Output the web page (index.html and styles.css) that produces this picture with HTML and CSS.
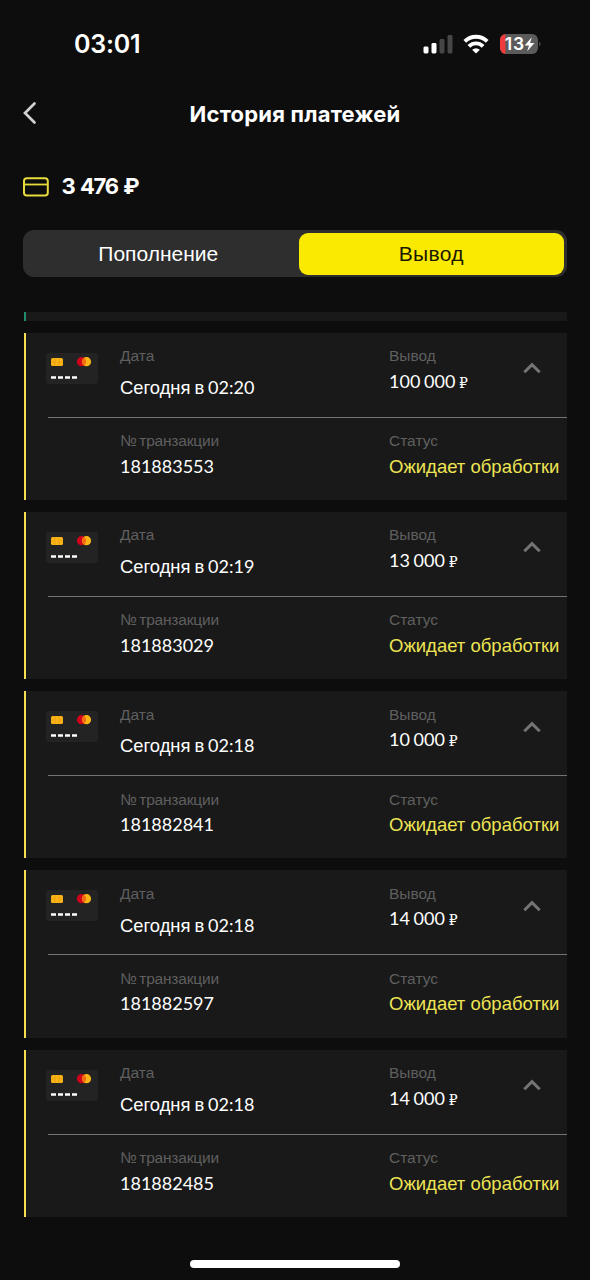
FILE: index.html
```html
<!DOCTYPE html>
<html lang="ru">
<head>
<meta charset="utf-8">
<title>История платежей</title>
<link rel="stylesheet" href="styles.css">
</head>
<body>
<svg class="defs" width="0" height="0">
  <symbol id="bank-card" viewBox="0 0 52 31">
    <rect width="52" height="31" rx="3" fill="#232323"/>
    <rect x="5" y="5" width="12" height="8" rx="1.6" fill="#fbb415"/>
    <path d="M5 9h3.5M13.500 9H17M9 5.200v7.600M13 5.200v7.600" stroke="#e69a10" stroke-width=".7"/>
    <circle cx="35.500" cy="8.700" r="4.600" fill="#d0021b"/>
    <circle cx="40.500" cy="8.700" r="4.600" fill="#fbb415"/>
    <path d="M38 4.800a4.600 4.600 0 0 1 0 7.800a4.600 4.600 0 0 1 0-7.800z" fill="#f36c12"/>
    <path d="M5 24.500h5M12 24.500h5M19 24.500h5M26 24.500h5" stroke="#fff" stroke-width="2.600"/>
  </symbol>
  <symbol id="chevron-up" viewBox="0 0 18 12">
    <path d="M1.300 10.300L9 2.600l7.700 7.700" fill="none" stroke="#747474" stroke-width="3"/>
  </symbol>
</svg>
<div class="screen">
  <div class="status">
    <span class="clock">03:01</span>
    <svg class="signal" width="30" height="20" viewBox="0 0 30 20">
      <rect x="0.500" y="12.500" width="5" height="7" rx="1.400" fill="#fff"/>
      <rect x="8.500" y="9" width="5" height="10.500" rx="1.400" fill="#fff"/>
      <rect x="16.500" y="5" width="5" height="14.500" rx="1.400" fill="#464646"/>
      <rect x="24.500" y="1" width="5" height="18.500" rx="1.400" fill="#464646"/>
    </svg>
    <svg class="wifi" width="26" height="20" viewBox="0 0 26 20">
      <g fill="none" stroke="#fff" stroke-width="3.900">
        <path d="M1.800 7.400C8 1.100 18 1.100 24.200 7.400"/>
        <path d="M5.900 12.300C10 8.400 16 8.400 20.100 12.300"/>
      </g>
      <path d="M9.100 15.700Q13 12.600 16.900 15.700L13 19.600z" fill="#fff"/>
    </svg>
    <svg class="battery" width="42" height="22" viewBox="0 0 42 22">
      <defs><clipPath id="shell"><rect x="0" y="1" width="38" height="20" rx="6"/></clipPath></defs>
      <rect x="0" y="1" width="38" height="20" rx="6" fill="#5b5b5b"/>
      <rect x="0" y="1" width="5.500" height="20" fill="#ee3b3b" clip-path="url(#shell)"/>
      <path d="M39.300 8.500q2.600 2.500 0 5z" fill="#5b5b5b"/>
      <text class="percent" x="4.700" y="17.300" textLength="19.500">13</text>
      <path d="M31.800 4.300L24.700 12.500h4.300L27.200 18.300 34.500 10h-4.400z" fill="#fff"/>
    </svg>
  </div>

  <header class="header">
    <svg class="back" width="14" height="24" viewBox="0 0 14 24">
      <path d="M11.500 2.500L2 12l9.500 9.500" fill="none" stroke="#d2d2d2" stroke-width="2.700" stroke-linecap="round"/>
    </svg>
    <h1 class="title">История платежей</h1>
  </header>

  <div class="balance">
    <svg width="26" height="20" viewBox="0 0 26 20">
      <rect x="1" y="1.200" width="23.800" height="17.400" rx="2.800" fill="none" stroke="#e6dc3c" stroke-width="2"/>
      <path d="M1 7.500h24" stroke="#e6dc3c" stroke-width="1.800"/>
    </svg>
    <span class="sum">3 476 ₽</span>
  </div>

  <div class="tabs">
    <div class="tab">Пополнение</div>
    <div class="tab active"><span>Вывод</span></div>
  </div>

  <main class="list">
    <div class="stub"></div>

    <section class="card">
      <div class="row first">
        <svg class="pic"><use href="#bank-card"/></svg>
        <div class="cell"><span class="label l-date">Дата</span><span class="value low"><span class="w">Сегодня в</span> 02:20</span></div>
        <div class="cell"><span class="label l-out">Вывод</span><span class="value">100 000 <i class="rub">₽</i></span></div>
        <svg class="chev"><use href="#chevron-up"/></svg>
      </div>
      <div class="row second">
        <div class="cell tx"><span class="label l-tx">№ транзакции</span><span class="value">181883553</span></div>
        <div class="cell"><span class="label l-st">Статус</span><span class="value pending">Ожидает обработки</span></div>
      </div>
    </section>

    <section class="card">
      <div class="row first">
        <svg class="pic"><use href="#bank-card"/></svg>
        <div class="cell"><span class="label l-date">Дата</span><span class="value low"><span class="w">Сегодня в</span> 02:19</span></div>
        <div class="cell"><span class="label l-out">Вывод</span><span class="value">13 000 <i class="rub">₽</i></span></div>
        <svg class="chev"><use href="#chevron-up"/></svg>
      </div>
      <div class="row second">
        <div class="cell tx"><span class="label l-tx">№ транзакции</span><span class="value">181883029</span></div>
        <div class="cell"><span class="label l-st">Статус</span><span class="value pending">Ожидает обработки</span></div>
      </div>
    </section>

    <section class="card">
      <div class="row first">
        <svg class="pic"><use href="#bank-card"/></svg>
        <div class="cell"><span class="label l-date">Дата</span><span class="value low"><span class="w">Сегодня в</span> 02:18</span></div>
        <div class="cell"><span class="label l-out">Вывод</span><span class="value">10 000 <i class="rub">₽</i></span></div>
        <svg class="chev"><use href="#chevron-up"/></svg>
      </div>
      <div class="row second">
        <div class="cell tx"><span class="label l-tx">№ транзакции</span><span class="value">181882841</span></div>
        <div class="cell"><span class="label l-st">Статус</span><span class="value pending">Ожидает обработки</span></div>
      </div>
    </section>

    <section class="card">
      <div class="row first">
        <svg class="pic"><use href="#bank-card"/></svg>
        <div class="cell"><span class="label l-date">Дата</span><span class="value low"><span class="w">Сегодня в</span> 02:18</span></div>
        <div class="cell"><span class="label l-out">Вывод</span><span class="value">14 000 <i class="rub">₽</i></span></div>
        <svg class="chev"><use href="#chevron-up"/></svg>
      </div>
      <div class="row second">
        <div class="cell tx"><span class="label l-tx">№ транзакции</span><span class="value">181882597</span></div>
        <div class="cell"><span class="label l-st">Статус</span><span class="value pending">Ожидает обработки</span></div>
      </div>
    </section>

    <section class="card">
      <div class="row first">
        <svg class="pic"><use href="#bank-card"/></svg>
        <div class="cell"><span class="label l-date">Дата</span><span class="value low"><span class="w">Сегодня в</span> 02:18</span></div>
        <div class="cell"><span class="label l-out">Вывод</span><span class="value">14 000 <i class="rub">₽</i></span></div>
        <svg class="chev"><use href="#chevron-up"/></svg>
      </div>
      <div class="row second">
        <div class="cell tx"><span class="label l-tx">№ транзакции</span><span class="value">181882485</span></div>
        <div class="cell"><span class="label l-st">Статус</span><span class="value pending">Ожидает обработки</span></div>
      </div>
    </section>
  </main>

  <div class="home"></div>
</div>
</body>
</html>
```

FILE: styles.css
```css
* { box-sizing: border-box; }
body {
  margin: 0;
  background: #0d0d0d;
  color: #fff;
  font-family: "Liberation Sans", Arial, sans-serif;
}
.defs { display: block; }
.screen {
  width: 590px;
  height: 1280px;
  display: flex;
  flex-direction: column;
  overflow: hidden;
}
.screen svg { display: block; flex: none; }

.status {
  height: 88px;
  padding: 0 48px 0 74px;
  display: flex;
  align-items: center;
}
.clock {
  margin-right: auto;
  font: 600 25px/30px Inter, sans-serif;
  letter-spacing: -0.2px;
}
.wifi { margin-left: 10px; }
.battery { margin-left: 11px; }
.percent { font: 600 17.5px Inter, sans-serif; fill: #fff; }

.header {
  height: 50px;
  padding: 0 23px;
  display: grid;
  grid-template-columns: 14px 1fr 14px;
  align-items: center;
}
.title {
  margin: 2px 0 0;
  text-align: center;
  font: 700 22px/30px Inter, sans-serif;
  letter-spacing: 0.2px;
  white-space: nowrap;
}

.balance {
  height: 92px;
  padding: 2px 23px 0;
  display: flex;
  align-items: center;
  gap: 12.5px;
}
.balance svg { margin-top: 3px; }
.sum { margin-top: 1px; font: 700 22px/30px Inter, sans-serif; letter-spacing: -1.4px; word-spacing: 2px; }

.tabs {
  height: 47px;
  margin: 0 23px;
  padding: 2.500px 3px;
  display: grid;
  grid-template-columns: 272.500px 1fr;
  background: #2e2e2e;
  border-radius: 11px;
  font-size: 21px;
}
.tab { padding: 1px 8px 0 0; display: flex; align-items: center; justify-content: center; }
.active { padding-right: 0; background: #fae900; color: #1b1800; border-radius: 9px; letter-spacing: 0.3px; }

.list {
  margin: 35px 23px 0 24px;
  display: flex;
  flex-direction: column;
  gap: 12px;
}
.stub { height: 8.750px; background: #191919; border-left: 2px solid #238a6c; }
.card { height: 167.200px; background: #191919; border-left: 2px solid #f5df51; }
.row { display: grid; margin-left: 22px; }
.first {
  height: 85px;
  grid-template-columns: 72px 269px 132px 1fr;
  align-items: start;
  border-bottom: 1.500px solid #747474;
}
.second {
  grid-template-columns: 72px 269px 1fr;
}
.tx { grid-column: 2; }
.cell {
  padding-top: 13.500px;
  display: flex;
  flex-direction: column;
  align-items: flex-start;
  white-space: nowrap;
}
.pic { width: 52px; height: 31px; margin: 20px 0 0 -2px; }
.chev { width: 18px; height: 12px; margin: 29.500px 0 0 1.500px; }
.label { font-size: 15.500px; line-height: 20px; color: #5f5f5f; }
.l-tx { word-spacing: -1.3px; letter-spacing: -0.2px; }
.value { font: 400 18px/24px Lato, sans-serif; margin-top: 2.600px; word-spacing: -0.9px; }
.low { margin-top: 8.800px; }
.w { font: 400 18.400px/20px "Liberation Sans", sans-serif; word-spacing: -1px; }
.rub { font: normal 400 14px/20px "DejaVu Serif", serif; }
.pending { font: 400 18.500px/24px "Liberation Sans", sans-serif; margin-top: 3.500px; word-spacing: 0; color: #eee454; }

.home {
  width: 210px;
  height: 8px;
  margin: auto auto 12px;
  background: #fff;
  border-radius: 4px;
}
```
